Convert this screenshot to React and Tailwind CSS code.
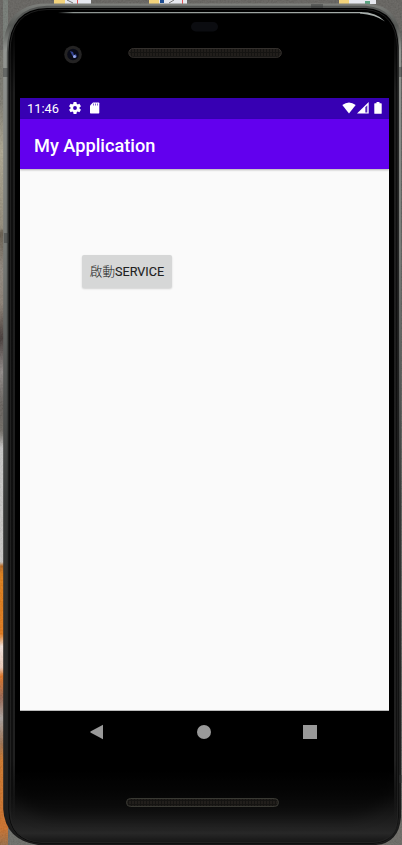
function PhoneShell() {
  return (
    <svg className="absolute inset-0" width="402" height="845" viewBox="0 0 402 845" aria-hidden="true">
      <defs>
        <linearGradient id="wall" x1="0" y1="0" x2="0" y2="845" gradientUnits="userSpaceOnUse">
          <stop offset="0" stopColor="#5e5e59" />
          <stop offset=".12" stopColor="#77756a" />
          <stop offset=".18" stopColor="#aaa38c" />
          <stop offset=".27" stopColor="#8d8573" />
          <stop offset=".275" stopColor="#5e5445" />
          <stop offset=".32" stopColor="#8b8278" />
          <stop offset=".36" stopColor="#85796d" />
          <stop offset=".4" stopColor="#3b302e" />
          <stop offset=".44" stopColor="#8b8583" />
          <stop offset=".48" stopColor="#5f5a55" />
          <stop offset=".51" stopColor="#6a655e" />
          <stop offset=".53" stopColor="#c8c8c7" />
          <stop offset=".665" stopColor="#c9c7c4" />
          <stop offset=".67" stopColor="#b66216" />
          <stop offset=".68" stopColor="#e07a0c" />
          <stop offset=".75" stopColor="#e3740f" />
          <stop offset=".765" stopColor="#f5e6df" />
          <stop offset=".79" stopColor="#f0cdba" />
          <stop offset=".8" stopColor="#e06f1b" />
          <stop offset=".825" stopColor="#96604a" />
          <stop offset=".85" stopColor="#a8a09c" />
          <stop offset=".88" stopColor="#9a6b48" />
          <stop offset=".9" stopColor="#cf711f" />
          <stop offset=".98" stopColor="#cb6a20" />
          <stop offset="1" stopColor="#96663c" />
        </linearGradient>
        <linearGradient id="rim" x1="0" y1="0" x2="0" y2="845" gradientUnits="userSpaceOnUse">
          <stop offset="0" stopColor="#858783" />
          <stop offset=".03" stopColor="#555754" />
          <stop offset=".06" stopColor="#929591" />
          <stop offset=".3" stopColor="#777a77" />
          <stop offset=".45" stopColor="#575958" />
          <stop offset=".6" stopColor="#363837" />
          <stop offset="1" stopColor="#191919" />
        </linearGradient>
        <linearGradient id="rimInner" x1="0" y1="0" x2="0" y2="845" gradientUnits="userSpaceOnUse">
          <stop offset="0" stopColor="#545654" />
          <stop offset=".4" stopColor="#444644" />
          <stop offset=".65" stopColor="#2a2b2a" />
          <stop offset="1" stopColor="#1c1c1c" />
        </linearGradient>
        <linearGradient id="chin" x1="0" y1="0" x2="0" y2="1">
          <stop offset="0" stopColor="#000" />
          <stop offset=".35" stopColor="#0a0a0a" />
          <stop offset=".85" stopColor="#272727" />
          <stop offset="1" stopColor="#101010" />
        </linearGradient>
        <linearGradient id="shine" x1="0" y1="0" x2="1" y2="0">
          <stop offset="0" stopColor="#8d9491" stopOpacity="0" />
          <stop offset=".05" stopColor="#8d9491" />
          <stop offset="1" stopColor="#a6adaa" />
        </linearGradient>
        <linearGradient id="side" x1="0" y1="0" x2="0" y2="845" gradientUnits="userSpaceOnUse">
          <stop offset=".03" stopColor="#1e1e1e" stopOpacity="0" />
          <stop offset=".11" stopColor="#1e1e1e" />
          <stop offset=".9" stopColor="#202020" />
          <stop offset=".98" stopColor="#202020" stopOpacity="0" />
        </linearGradient>
        <pattern id="mesh" width="3" height="4" patternUnits="userSpaceOnUse">
          <rect width="3" height="4" fill="#151412" />
          <path d="M1 1v3" stroke="#2c2823" strokeWidth="1" />
        </pattern>
        <filter id="grain" x="0" y="0" width="1" height="1">
          <feTurbulence type="fractalNoise" baseFrequency=".6" numOctaves="2" result="n" />
          <feColorMatrix in="n" type="matrix" values=".9 0 0 0 0 .9 0 0 0 0 .9 0 0 0 0 0 0 0 0 .13" />
        </filter>
        <filter id="soft"><feGaussianBlur stdDeviation="7" /></filter>
        <clipPath id="body"><path d="M47 8.500H366Q398 10 398 48V817Q398 842 373 843H42Q9 841 9 809V52Q10 9 47 8.500Z" /></clipPath>
      </defs>
      <rect width="402" height="845" fill="url(#wall)" />
      <path d="M0 0h402v50H0z" fill="#5e5c58" />
      <path d="M398 30h4v815h-4z" fill="#565653" />
      <path d="M370 810h32v35h-32z" fill="#65635e" />
      <path d="M8 828h32v17H8z" fill="#666762" />
      <path d="M3 0h5v48H3z" fill="#77817a" opacity=".7" />
      <rect width="402" height="845" filter="url(#grain)" />
      <path d="M54 0h11v4H54zM149 0h10v4h-10zM339 0h10v4h-10z" fill="#f2d27b" />
      <path d="M65 0h26v4H65zM159 0h28v4h-28zM349 0h27v4h-27z" fill="#e6e8ef" />
      <path d="M77.500 0v4M182.500 0v4" stroke="#e45455" />
      <path d="M67 0l6 3M169 3l5-3" stroke="#777" />
      <path d="M160 0h4v3h-4z" fill="#1e4d91" />
      <path d="M365 1h5v3h-5z" fill="#5ba482" />
      <path d="M47 3.500H366Q400.500 5 401 43V817Q399 843 376 845H38Q5 840 3.200 809V50Q4 4 47 3.500Z" fill="url(#rim)" />
      <path d="M47 5.700H366Q398.500 8 399 46V817Q397 843 374 844H40Q7 841 6.800 809V52Q7 7 47 5.700Z" fill="url(#rimInner)" />
      <path d="M47 8H366Q398 10 398.500 48V817Q397 842.500 373 843.500H41Q8.500 841 8.500 809V52Q9 8.500 47 8Z" fill="#000" />
      <g clipPath="url(#body)">
        <path d="M9 768h390v77H9z" fill="url(#chin)" />
        <path d="M6 690h391v82Q391 816 346 818H58Q14 816 12 772Z" fill="#000" opacity=".4" filter="url(#soft)" />
        <path d="M10 20h1.500v820H10zM12.500 20h2.500v820h-2.500zM394 20h2.500v820H394z" fill="url(#side)" />
      </g>
      <path d="M10 809V52Q10.500 10.500 47 9.500H366Q396 12 397.500 48V817Q396 841 373 842.500H42Q10.500 841 10 809Z" fill="none" stroke="#242524" strokeWidth=".8" />
      <path d="M58 12h304v1.300H58z" fill="url(#shine)" />
      <path d="M360 12Q377 12 385 21.500Q375 14.500 360 13.500Z" fill="#a8afac" />
      <path d="M311 4h12v4h-12zM3 68h5v9H3zM4 233h5v10H4zM399 67h3v10h-3zM399 775h3v8h-3z" fill="#343635" opacity=".45" />
      <rect x="191" y="22" width="27" height="9.500" rx="4.750" fill="#0b0c10" />
      <circle cx="73" cy="54.500" r="8.800" fill="#242323" />
      <circle cx="73" cy="54.500" r="5.800" fill="#090b18" />
      <path d="M70 51l3 1 1 3 2-1 1 3-3 1-2-3z" fill="#334391" />
      <circle cx="74.500" cy="56.500" r="1.500" fill="#96a7e8" />
      <rect x="128.800" y="48.500" width="152.500" height="8.800" rx="4.400" fill="url(#mesh)" stroke="#34302d" />
      <rect x="126.500" y="798.500" width="152" height="8" rx="4" fill="url(#mesh)" stroke="#393933" />
    </svg>
  );
}

function StatusBar() {
  return (
    <div className="flex h-[21px] items-center bg-[#3700b3] pl-[7px] pr-[7px] text-white">
      <span className="w-[42px] text-[12.8px] leading-[21px]">11:46</span>
      <svg className="-mt-px" width="12" height="12" viewBox="2 2 20 20" fill="currentColor">
        <path d="M19.430 12.980c.04-.32.07-.64.07-.98s-.03-.66-.07-.98l2.110-1.650a.5.5 0 0 0 .12-.64l-2-3.460a.5.5 0 0 0-.61-.22l-2.490 1a7.300 7.300 0 0 0-1.690-.98l-.38-2.650A.49.49 0 0 0 14 2h-4a.49.49 0 0 0-.49.42l-.38 2.650c-.61.25-1.170.59-1.690.98l-2.490-1a.5.5 0 0 0-.61.22l-2 3.460a.5.5 0 0 0 .12.64l2.110 1.650a7.900 7.900 0 0 0 0 1.960l-2.110 1.650a.5.5 0 0 0-.12.64l2 3.460c.12.220.39.300.61.220l2.490-1c.52.400 1.080.730 1.690.980l.38 2.650c.03.240.240.420.490.420h4c.25 0 .46-.18.49-.42l.38-2.650a7.300 7.300 0 0 0 1.690-.98l2.490 1c.23.090.49 0 .61-.22l2-3.460a.5.5 0 0 0-.12-.64zM12 15.200a3.200 3.200 0 1 1 0-6.400 3.200 3.200 0 0 1 0 6.400z" />
      </svg>
      <svg className="-mt-px ml-[9px]" width="10" height="12" viewBox="0 0 10 12">
        <path d="M3 .5h5.600q.7 0 .7.700v9.600q0 .7-.7.700H.7q-.7 0-.7-.7V3.400z" fill="currentColor" />
        <path d="M3.500 1.500v2M5.500 1.500v2M7.500 1.500v2" stroke="#3700b3" strokeWidth=".6" />
      </svg>
      <svg className="-mt-px ml-auto" width="14" height="12" viewBox="0 0 14 12">
        <path d="M.3 3Q7-2 13.700 3L7 11.500Z" fill="currentColor" />
      </svg>
      <svg className="-mt-px ml-px" width="12" height="12" viewBox="0 0 12 12">
        <path d="M0 11.500L11.700 0V11.500Z" fill="currentColor" />
        <path d="M8.300 5.200l2-2v7.300h-2z" fill="#3700b3" opacity=".85" />
      </svg>
      <svg className="-mt-px ml-[5px]" width="8" height="12" viewBox="0 0 8 12" fill="currentColor">
        <path d="M2.500 0h3v1.200h1.600q.6 0 .6.600v9.400q0 .6-.6.600H.9q-.6 0-.6-.6V1.800q0-.6.600-.6h1.600z" />
      </svg>
    </div>
  );
}

function NavigationBar() {
  return (
    <div className="flex h-[42px] items-center bg-black pl-[70px] text-[#999]">
      <svg width="14" height="16" viewBox="0 0 14 16">
        <path d="M13 .7v14.600L.4 8.500V7.500Z" fill="currentColor" />
      </svg>
      <div className="ml-[93px] size-[14px] rounded-full bg-[#999]" />
      <div className="ml-[92px] size-[14px] bg-[#999]" />
    </div>
  );
}

export default function App() {
  return (
    <div className="relative h-[845px] w-[402px] overflow-hidden bg-black font-[Roboto,'Noto_Sans_CJK_TC',sans-serif]">
      <PhoneShell />
      <main className="relative flex w-full flex-col pt-[98px] pr-[13px] pl-5">
        <StatusBar />
        <header className="z-10 flex h-[50px] items-center bg-[#6200ee] pt-[2px] pl-[14px] text-[18.2px] leading-[27px] font-medium text-white shadow-[0_1px_2px_rgba(0,0,0,0.3)]">
          My Application
        </header>
        <section className="h-[542px] border-b border-[#bbb] bg-[#fafafa] pt-[86px] pl-[62px]">
          <button className="flex h-[33px] w-[90px] items-center justify-center rounded-[2px] bg-[#d6d7d7] pt-[2px] text-[12.6px] whitespace-nowrap text-[#202020] shadow-[0_1px_2px_rgba(0,0,0,0.16)]">
            <span className="font-light">啟動</span>
            <span className="[-webkit-text-stroke:0.1px_#202020]">SERVICE</span>
          </button>
        </section>
        <NavigationBar />
      </main>
    </div>
  );
}
